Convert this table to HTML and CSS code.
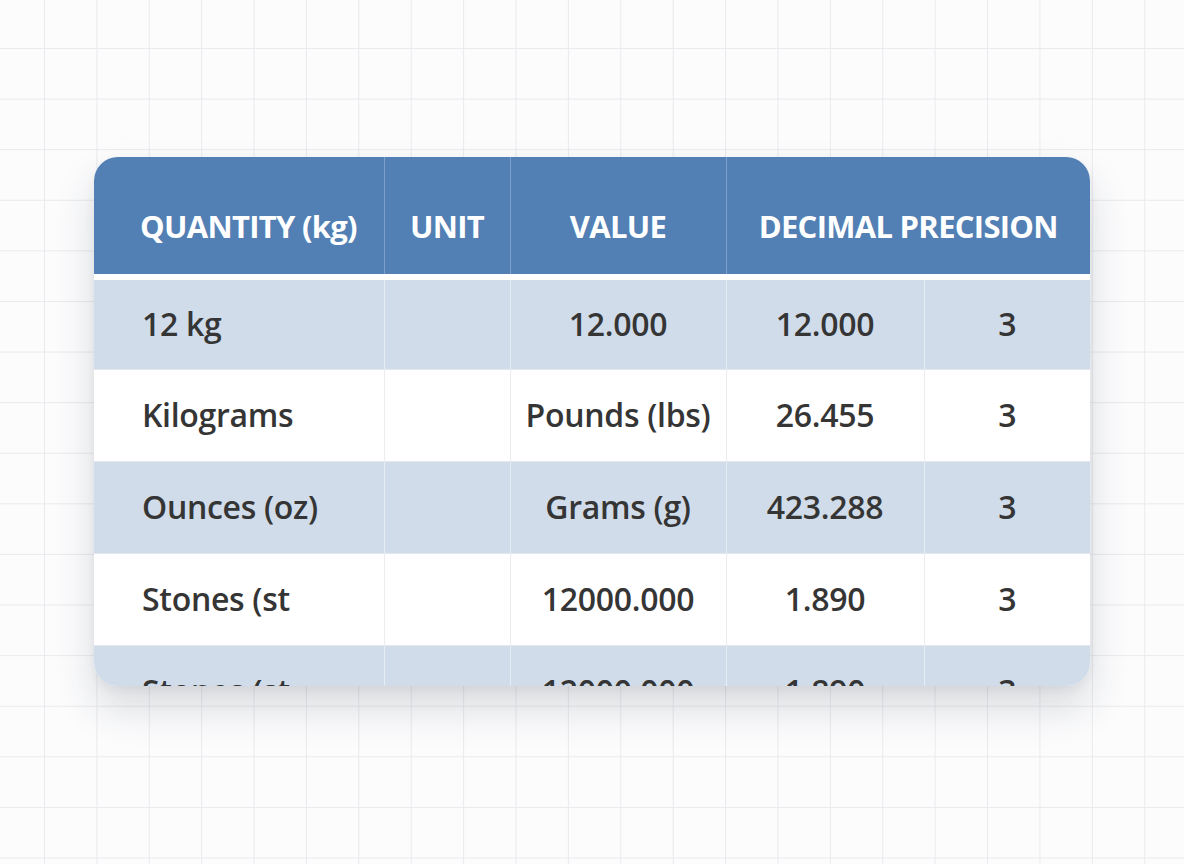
FILE: index.html
```html
<!DOCTYPE html>
<html lang="en">
<head>
<meta charset="utf-8">
<title>Unit conversion table</title>
<link rel="stylesheet" href="styles.css">
</head>
<body>
<main class="card">
  <table class="conv">
    <colgroup>
      <col class="c1"><col class="c2"><col class="c3"><col class="c4"><col class="c5">
    </colgroup>
    <thead>
      <tr>
        <th class="left">QUANTITY (kg)</th>
        <th>UNIT</th>
        <th>VALUE</th>
        <th colspan="2">DECIMAL PRECISION</th>
      </tr>
    </thead>
    <tbody>
      <tr class="alt">
        <td class="left">12 kg</td><td></td><td>12.000</td><td>12.000</td><td>3</td>
      </tr>
      <tr>
        <td class="left">Kilograms</td><td></td><td>Pounds (lbs)</td><td>26.455</td><td>3</td>
      </tr>
      <tr class="alt">
        <td class="left">Ounces (oz)</td><td></td><td>Grams (g)</td><td>423.288</td><td>3</td>
      </tr>
      <tr>
        <td class="left">Stones (st</td><td></td><td>12000.000</td><td>1.890</td><td>3</td>
      </tr>
      <tr class="alt">
        <td class="left">Stones (st</td><td></td><td>12000.000</td><td>1.890</td><td>3</td>
      </tr>
    </tbody>
  </table>
</main>
</body>
</html>
```
FILE: styles.css
```css
html, body {
  margin: 0;
  padding: 0;
}

body {
  min-height: 864px;
  background-color: #fcfcfd;
  background-image:
    linear-gradient(to right, #eaeaee 1px, transparent 1px),
    linear-gradient(to bottom, #eaeaee 1px, transparent 1px);
  background-size: 52.4px 50.6px;
  background-position: 44px 48px;
  font-family: "Open Sans", "Liberation Sans", sans-serif;
  overflow: hidden;
}

.card {
  width: 996px;
  height: 529px;
  margin: 157px auto 0;
  border-radius: 24px;
  overflow: hidden;
  background: #ffffff;
  box-shadow: 0 22px 40px rgba(40, 48, 64, 0.16), 0 4px 10px rgba(40, 48, 64, 0.06);
}

.conv {
  width: 996px;
  border-collapse: collapse;
  table-layout: fixed;
}

.c1 { width: 290px; }
.c2 { width: 126px; }
.c3 { width: 216px; }
.c4 { width: 198px; }
.c5 { width: 166px; }

.conv th {
  background: #5280b4;
  color: #ffffff;
  font-weight: 700;
  font-size: 31px;
  line-height: 40px;
  letter-spacing: -0.7px;
  padding: 49px 0 28px;
  text-align: center;
  border-left: 1px solid #7d9fc8;
  border-bottom: 6px solid #ffffff;
  white-space: nowrap;
}

.conv th:first-child {
  border-left: none;
}

.conv td {
  height: 92px;
  padding: 0;
  box-sizing: border-box;
  font-size: 32px;
  font-weight: 600;
  line-height: 40px;
  letter-spacing: -0.3px;
  color: #353535;
  text-align: center;
  vertical-align: middle;
  border-left: 1px solid #ececee;
  border-bottom: 1px solid #e3e8ee;
  white-space: nowrap;
}

.conv td:first-child {
  border-left: none;
}

.conv .left {
  text-align: left;
  padding-left: 48px;
}

.conv th.left {
  padding-left: 46px;
}

.conv tr.alt td {
  background: #d0dcea;
  border-left-color: #e6edf5;
}

.conv tr.alt td:first-child {
  border-left: none;
}
```
